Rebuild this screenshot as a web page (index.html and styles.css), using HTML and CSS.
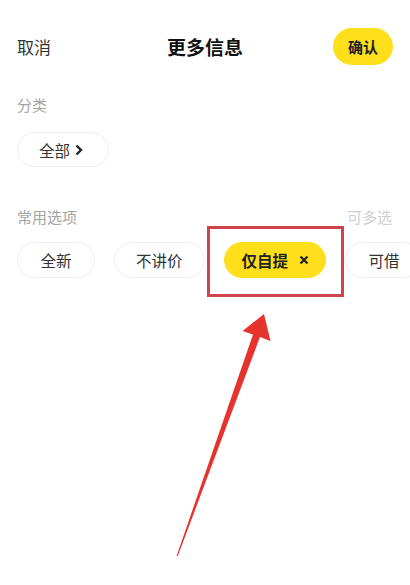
FILE: index.html
```html
<!DOCTYPE html>
<html lang="zh-CN">
<head>
    <meta charset="UTF-8">
    <meta name="viewport" content="width=device-width, initial-scale=1.0">
    <title>更多信息</title>
    <link rel="stylesheet" href="styles.css">
</head>
<body>
    <div class="page">
        <header class="topbar">
            <span class="cancel">取消</span>
            <h1 class="title">更多信息</h1>
            <div class="confirm-wrap">
                <button class="confirm">确认</button>
            </div>
        </header>

        <section class="group group-category">
            <div class="group-label">分类</div>
            <div class="chips">
                <span class="chip">全部
                    <svg class="chevron" viewBox="0 0 8 12" width="8" height="12">
                        <path d="M1.5 1.5 L6 6 L1.5 10.5" fill="none" stroke="#222" stroke-width="2.4"/>
                    </svg>
                </span>
            </div>
        </section>

        <section class="group group-options">
            <div class="group-label">
                <span>常用选项</span>
                <span class="hint">可多选</span>
            </div>
            <div class="chips chips-scroll">
                <span class="chip">全新</span>
                <span class="chip">不讲价</span>
                <span class="marked">
                    <span class="chip chip-active">仅自提
                        <svg class="close" viewBox="0 0 10 10" width="10" height="10">
                            <path d="M1.5 1.5 L8.5 8.5 M8.5 1.5 L1.5 8.5" stroke="#222" stroke-width="2.2"/>
                        </svg>
                    </span>
                    <span class="mark-box"></span>
                </span>
                <span class="chip">可借</span>
            </div>
        </section>

        <!-- 标注箭头 -->
        <svg class="arrow" viewBox="0 0 410 585" width="410" height="585">
            <polygon points="264,314 270.5,341 260,337 177.8,556 176.6,556 253,334.5 242.5,331" fill="#e6332e"/>
        </svg>
    </div>
</body>
</html>
```

FILE: styles.css
```css
* {
    margin: 0;
    padding: 0;
    box-sizing: border-box;
}

body {
    font-family: "Noto Sans CJK SC", "Noto Sans", sans-serif;
    background: #fff;
    color: #333;
    width: 410px;
    height: 585px;
    overflow: hidden;
}

.page {
    position: relative;
    width: 410px;
    height: 585px;
    overflow: hidden;
}

/* En-tête */
.topbar {
    display: grid;
    grid-template-columns: 1fr auto 1fr;
    align-items: center;
    padding: 28px 17px 0 17px;
}

.cancel {
    font-size: 17px;
    color: #333;
}

.title {
    font-size: 19px;
    font-weight: bold;
    color: #111;
    line-height: 37px;
}

.confirm-wrap {
    display: flex;
    justify-content: flex-end;
}

.confirm {
    border: none;
    background: #ffdf1c;
    color: #222;
    font-family: inherit;
    font-size: 15px;
    font-weight: bold;
    height: 37px;
    width: 60px;
    border-radius: 19px;
}

/* Groupes */
.group {
    padding: 0 17px;
}

.group-category {
    margin-top: 30px;
}

.group-options {
    margin-top: 40px;
    padding-right: 0;
}

.group-label {
    display: flex;
    justify-content: space-between;
    font-size: 15px;
    line-height: 20px;
    color: #a3a3a3;
    padding-right: 18px;
}

.hint {
    color: #cfcfcf;
}

.chips {
    display: flex;
    gap: 19px;
    margin-top: 17px;
}

/* liste horizontale coupée au bord droit */
.chips-scroll {
    overflow: hidden;
    white-space: nowrap;
    padding: 20px 0 22px;
    margin-top: -5px;
}

.chip {
    display: inline-flex;
    align-items: center;
    justify-content: center;
    flex-shrink: 0;
    height: 35px;
    min-width: 78px;
    padding: 0 21px;
    border: 1px solid #eeeeee;
    border-radius: 18px;
    font-size: 15.5px;
    color: #333;
    background: #fff;
}

.group-options .chip {
    height: 36px;
}

.chevron {
    margin-left: 5px;
    margin-right: 4px;
}

.chip-active {
    background: #ffdf1c;
    border-color: #ffdf1c;
    font-weight: bold;
    color: #222;
    padding: 0 16px 0 17px;
}

.close {
    margin-left: 11px;
}

/* Cadre d'annotation */
.marked {
    position: relative;
    display: inline-flex;
    flex-shrink: 0;
}

.mark-box {
    position: absolute;
    top: -16px;
    bottom: -19px;
    left: -17px;
    right: -18px;
    border: 3px solid #cf444b;
    pointer-events: none;
}

.arrow {
    position: absolute;
    top: 0;
    left: 0;
    pointer-events: none;
}
```
